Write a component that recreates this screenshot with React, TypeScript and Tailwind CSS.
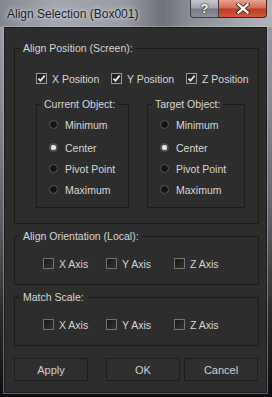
import React from "react";

function Check({ on }: { on?: boolean }) {
  return (
    <span
      className={
        "w-[11px] h-[11px] shrink-0 flex items-center justify-center border bg-[linear-gradient(135deg,#181818,#333333)] " +
        (on ? "border-[#9a9a9a]" : "border-[#747474]")
      }
    >
      {on && (
        <svg width="9" height="9" viewBox="0 0 9 9">
          <path d="M1.4 4.6 L3.5 6.7 L7.6 1.6" stroke="#ececec" strokeWidth="1.7" fill="none" />
        </svg>
      )}
    </span>
  );
}

function Radio({ on, label }: { on?: boolean; label: string }) {
  return (
    <div className="h-[21px] flex items-center pl-[12px]">
      <span className="w-[9px] h-[9px] rounded-full border border-[#595959] bg-[#131313] flex items-center justify-center shrink-0">
        {on && <span className="w-[5px] h-[5px] rounded-full bg-[#e2e2e2] shadow-[0_0_2px_#ffffff]" />}
      </span>
      <span className="ml-[7px]">{label}</span>
    </div>
  );
}

function AxisRow() {
  // ряд X/Y/Z Axis, used twice
  return (
    <div className="mt-[15px] h-[13px] flex items-center pl-[28px]">
      <div className="w-[63px] flex items-center gap-[5px]">
        <Check />
        <span>X Axis</span>
      </div>
      <div className="w-[68px] flex items-center gap-[5px]">
        <Check />
        <span>Y Axis</span>
      </div>
      <div className="flex items-center gap-[5px]">
        <Check />
        <span>Z Axis</span>
      </div>
    </div>
  );
}

function SubGroup({ title, w }: { title: string; w: string }) {
  return (
    <fieldset className={"border border-[#1c1c1c] pb-[7px] " + w}>
      <legend className="ml-[4px] px-[3px] leading-[12px]">{title}</legend>
      <div className="mt-[4px]">
        <Radio label="Minimum" />
        <div className="mt-[2px]">
          <Radio on label="Center" />
        </div>
        <Radio label="Pivot Point" />
        <Radio label="Maximum" />
      </div>
    </fieldset>
  );
}

export default function App() {
  return (
    <div className="w-[272px] h-[397px] flex flex-col overflow-hidden font-['Liberation_Sans',Arial,sans-serif] bg-[linear-gradient(180deg,#9fa2aa_0%,#8a8c94_25%,#5f6168_55%,#2c2c31_78%,#0c0c10_100%)]">
      {/* title bar */}
      <div className="h-[27px] flex items-start bg-[linear-gradient(90deg,#858790_0%,#a4a7ae_20%,#9a9ca4_45%,#6f7179_60%,#8d8f97_70%,#b3b5bc_100%)]">
        <div className="flex-1 pl-[7px] pt-[7px] text-[12px] leading-[14px] text-[#1a1a28] [text-shadow:0_0_6px_#d8dae0,0_0_3px_#d8dae0]">
          Align Selection (Box001)
        </div>
        <div className="flex mr-[5px]">
          <div className="w-[29px] h-[18px] flex items-center justify-center border border-t-0 border-[#3c3e44] rounded-bl-[4px] bg-[linear-gradient(180deg,#c3c6cc_0%,#a2a5ad_45%,#7a7d86_55%,#8e9199_100%)] text-white text-[13px] font-bold [text-shadow:0_0_2px_#222,0_0_1px_#000]">
            ?
          </div>
          <div className="w-[48px] h-[18px] flex items-center justify-center border border-t-0 border-l-0 border-[#4a2018] rounded-br-[4px] bg-[linear-gradient(180deg,#e7a191_0%,#d46c57_45%,#c13b23_55%,#cf5a3c_100%)]">
            <svg width="14" height="11" viewBox="0 0 14 11">
              <path d="M2.5 1.5 L11.5 9.5 M11.5 1.5 L2.5 9.5" stroke="#3a1a14" strokeWidth="4" strokeLinecap="square" />
              <path d="M2.5 1.5 L11.5 9.5 M11.5 1.5 L2.5 9.5" stroke="#ffffff" strokeWidth="2.4" strokeLinecap="square" />
            </svg>
          </div>
        </div>
      </div>

      {/* client area */}
      <div className="ml-[4px] w-[263px] h-[366px] border border-[#1b1b1b] shadow-[0_0_0_1px_rgba(200,202,210,0.45)] bg-[#2d2d2d] text-[#d6d6d6] text-[10.5px] leading-[12px] pl-[9px] pr-[7px]">
        <fieldset className="mt-[14px] border border-[#1c1c1c] pb-[15px]">
          <legend className="ml-[5px] px-[3px] leading-[12px]">Align Position (Screen):</legend>
          <div className="mt-[18px] h-[13px] flex items-center pl-[21px]">
            <div className="w-[75px] flex items-center gap-[5px]">
              <Check on />
              <span>X Position</span>
            </div>
            <div className="w-[75px] flex items-center gap-[5px]">
              <Check on />
              <span>Y Position</span>
            </div>
            <div className="flex items-center gap-[5px]">
              <Check on />
              <span>Z Position</span>
            </div>
          </div>
          <div className="mt-[13px] flex pl-[21px] gap-[18px]">
            <SubGroup title="Current Object:" w="w-[93px]" />
            <SubGroup title="Target Object:" w="w-[98px]" />
          </div>
        </fieldset>

        <fieldset className="mt-[6px] border border-[#1c1c1c] pb-[14px]">
          <legend className="ml-[5px] px-[3px] leading-[12px]">Align Orientation (Local):</legend>
          <AxisRow />
        </fieldset>

        <fieldset className="mt-[6px] border border-[#1c1c1c] pb-[14px]">
          <legend className="ml-[5px] px-[3px] leading-[12px]">Match Scale:</legend>
          <AxisRow />
        </fieldset>

        <div className="mt-[12px] flex text-[11px] text-[#cfcfcf]">
          <button className="w-[74px] h-[23px] border border-[#1d1d1d] bg-[#2f2f2f]">Apply</button>
          <button className="ml-[18px] w-[74px] h-[23px] border border-[#1d1d1d] bg-[#2f2f2f]">OK</button>
          <button className="ml-[4px] w-[74px] h-[23px] border border-[#1d1d1d] bg-[#2f2f2f]">Cancel</button>
        </div>
      </div>
    </div>
  );
}
